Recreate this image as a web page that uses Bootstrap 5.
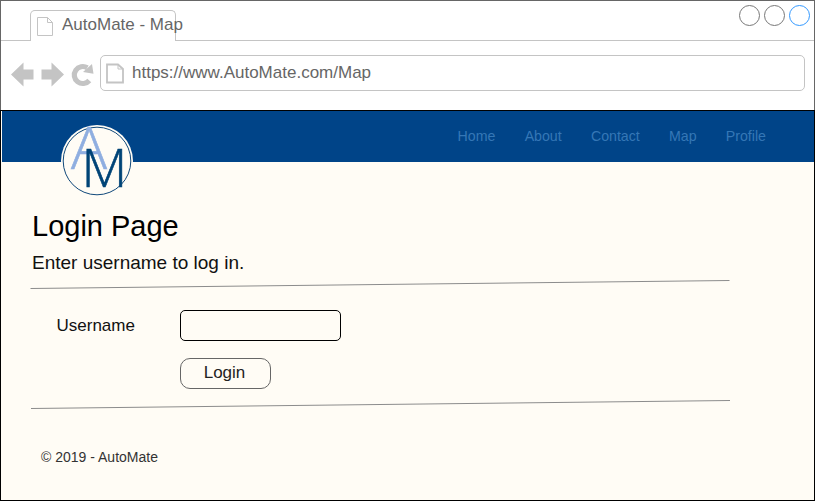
<!DOCTYPE html>
<html lang="en">
<head>
<meta charset="utf-8">
<meta name="viewport" content="width=device-width, initial-scale=1">
<title>AutoMate - Map</title>
<link href="https://cdn.jsdelivr.net/npm/bootstrap@5.3.0/dist/css/bootstrap.min.css" rel="stylesheet">
<style>
body { font-family: "Liberation Sans", Arial, sans-serif; background: #fff; overflow: hidden; }
.browser { width: 815px; height: 501px; }
.chrome { height: 110px; border: 1px solid #666; border-bottom: 0; color: #666; font-size: 17px; line-height: 20px; }
.tab-strip { height: 40px; }
.strip-line { border-bottom: 1px solid #c4c4c4; }
.lead-in { width: 29px; }
.page-tab { width: 146px; height: 31px; border: 1px solid #c4c4c4; border-bottom: 0; border-radius: 5px 5px 0 0; padding: 4px 0 0 6px; }
.page-tab svg { margin-top: 2px; }
.page-tab span { margin-left: 8px; }
.dots { gap: 3px; padding: 3px 3px 0 0; }
.dots circle { fill: none; stroke: #777; }
.dots .active-dot { stroke: #3399ff; }
.toolbar { padding: 14px 9px 0 10px; }
.address { height: 36px; border: 1px solid #c4c4c4; border-radius: 5px; padding: 0 0 0 5px; margin-left: 5px; }
.address span { margin-left: 8px; }
.site { height: 391px; border: 1px solid #000; background: #fffcf5; color: #111; padding-left: 1px; }
.site-nav { height: 51px; background: #004488; padding: 0 48px 0 59px; }
.site-nav .nav { gap: 29.2px; padding-top: 15px; }
.site-nav .nav-link { padding: 0; font-size: 14.2px; line-height: 20px; color: #3577b6; }
.logo { margin-top: 14px; width: 72px; height: 72px; overflow: visible; }
.logo text { font-family: "Open Sans", "Noto Sans", sans-serif; font-weight: 300; stroke-width: .6px; }
.logo-a { fill: #8faee0; stroke: #8faee0; }
.logo-m { fill: #004477; stroke: #004477; }
.content { padding-left: 28px; }
.content h1 { font-size: 29px; line-height: 34px; color: #000; margin: 47px 0 0 2px; font-weight: 400; }
.intro { font-size: 19px; line-height: 24px; margin: 8px 0 5px 2px; }
.rule { display: block; width: 700px; height: 10px; }
.rule line { stroke: #8c8c8c; stroke-width: 1; }
.login-form { font-size: 17px; line-height: 20px; margin: 20px 0 11px; }
.field { margin-left: 26.5px; }
.login-form label { width: 123.5px; }
.login-form .form-control { width: 161px; height: 31px; border: 1px solid #000; border-radius: 5px; background: transparent; }
.login-form .btn { width: 91px; height: 31px; border: 1px solid #666; border-radius: 10px; padding: 0 2px 2px 0; font-size: 17px; line-height: 20px; color: #222; margin: 17px 0 0 150px; }
.copy { font-size: 14px; line-height: 20px; color: #333; padding: 37px 0 0 11px; }
</style>
<script src="https://cdn.jsdelivr.net/npm/bootstrap@5.3.0/dist/js/bootstrap.bundle.min.js"></script>
</head>
<body>
<div class="browser">
  <header class="chrome">
    <div class="tab-strip d-flex align-items-stretch">
      <div class="lead-in strip-line"></div>
      <div class="page-tab d-flex align-self-end text-nowrap">
        <svg class="flex-shrink-0" width="17" height="20" viewBox="0 0 17 20" fill="none" stroke="#c4c4c4"><path d="M.5 .5H10.500L15.500 5.500V18.500H.5ZM10.500 .5V5.500H15.500"/></svg>
        <span>AutoMate - Map</span>
      </div>
      <div class="strip-line flex-grow-1 d-flex justify-content-end">
        <div class="dots d-flex">
          <svg width="22" height="22"><circle cx="10.500" cy="11.500" r="10"/></svg>
          <svg width="22" height="22"><circle cx="10.500" cy="11.500" r="10"/></svg>
          <svg width="22" height="22"><circle class="active-dot" cx="10.500" cy="11.500" r="10"/></svg>
        </div>
      </div>
    </div>
    <div class="toolbar d-flex align-items-start">
      <svg width="84" height="36" viewBox="11 55 84 36" class="flex-shrink-0" fill="#c4c4c4">
        <path d="M11 74.500L23.500 62.500V69.500H33.500V79.500H23.500V86.500Z"/>
        <path d="M64 74.500L51.500 62.500V69.500H41.500V79.500H51.500V86.500Z"/>
        <path d="M89.300 80.500A8.500 8.500 0 1 1 87.300 67.800" fill="none" stroke="#c4c4c4" stroke-width="5.200"/>
        <path d="M92 64L93.500 73.800L83 72Z"/>
      </svg>
      <div class="address flex-grow-1 d-flex align-items-center">
        <svg width="18" height="21" viewBox="0 0 18 21" fill="none" stroke="#c4c4c4"><path stroke-width="1.800" d="M1 1.500H12L17 6V19.500H1Z"/><path d="M12 1V6H17"/></svg>
        <span>https://www.AutoMate.com/Map</span>
      </div>
    </div>
  </header>
  <main class="site">
    <nav class="site-nav d-flex justify-content-between align-items-start">
      <svg class="logo flex-shrink-0" viewBox="0 0 72 72">
        <circle cx="36" cy="36" r="36" fill="#fffcf5"/>
        <circle cx="36" cy="36" r="33.800" fill="none" stroke="#10487a" stroke-width="1"/>
        <text class="logo-a" x="10" y="44" font-size="58" textLength="36" lengthAdjust="spacingAndGlyphs">A</text>
        <text class="logo-m" x="20.500" y="62" font-size="53">M</text>
      </svg>
      <ul class="nav">
        <li><a class="nav-link" href="#">Home</a></li>
        <li><a class="nav-link" href="#">About</a></li>
        <li><a class="nav-link" href="#">Contact</a></li>
        <li><a class="nav-link" href="#">Map</a></li>
        <li><a class="nav-link" href="#">Profile</a></li>
      </ul>
    </nav>
    <div class="content">
      <h1>Login Page</h1>
      <p class="intro">Enter username to log in.</p>
      <svg class="rule" viewBox="0 0 700 10"><line x1="0.500" y1="8.500" x2="699.500" y2="0.500"/></svg>
      <form class="login-form">
        <div class="field d-flex align-items-center">
          <label for="username">Username</label>
          <input id="username" type="text" class="form-control">
        </div>
        <button type="button" class="btn d-block">Login</button>
      </form>
      <svg class="rule" viewBox="0 0 700 10"><line x1="1" y1="8.500" x2="700" y2="0.500"/></svg>
      <footer class="copy">© 2019 - AutoMate</footer>
    </div>
  </main>
</div>
</body>
</html>
